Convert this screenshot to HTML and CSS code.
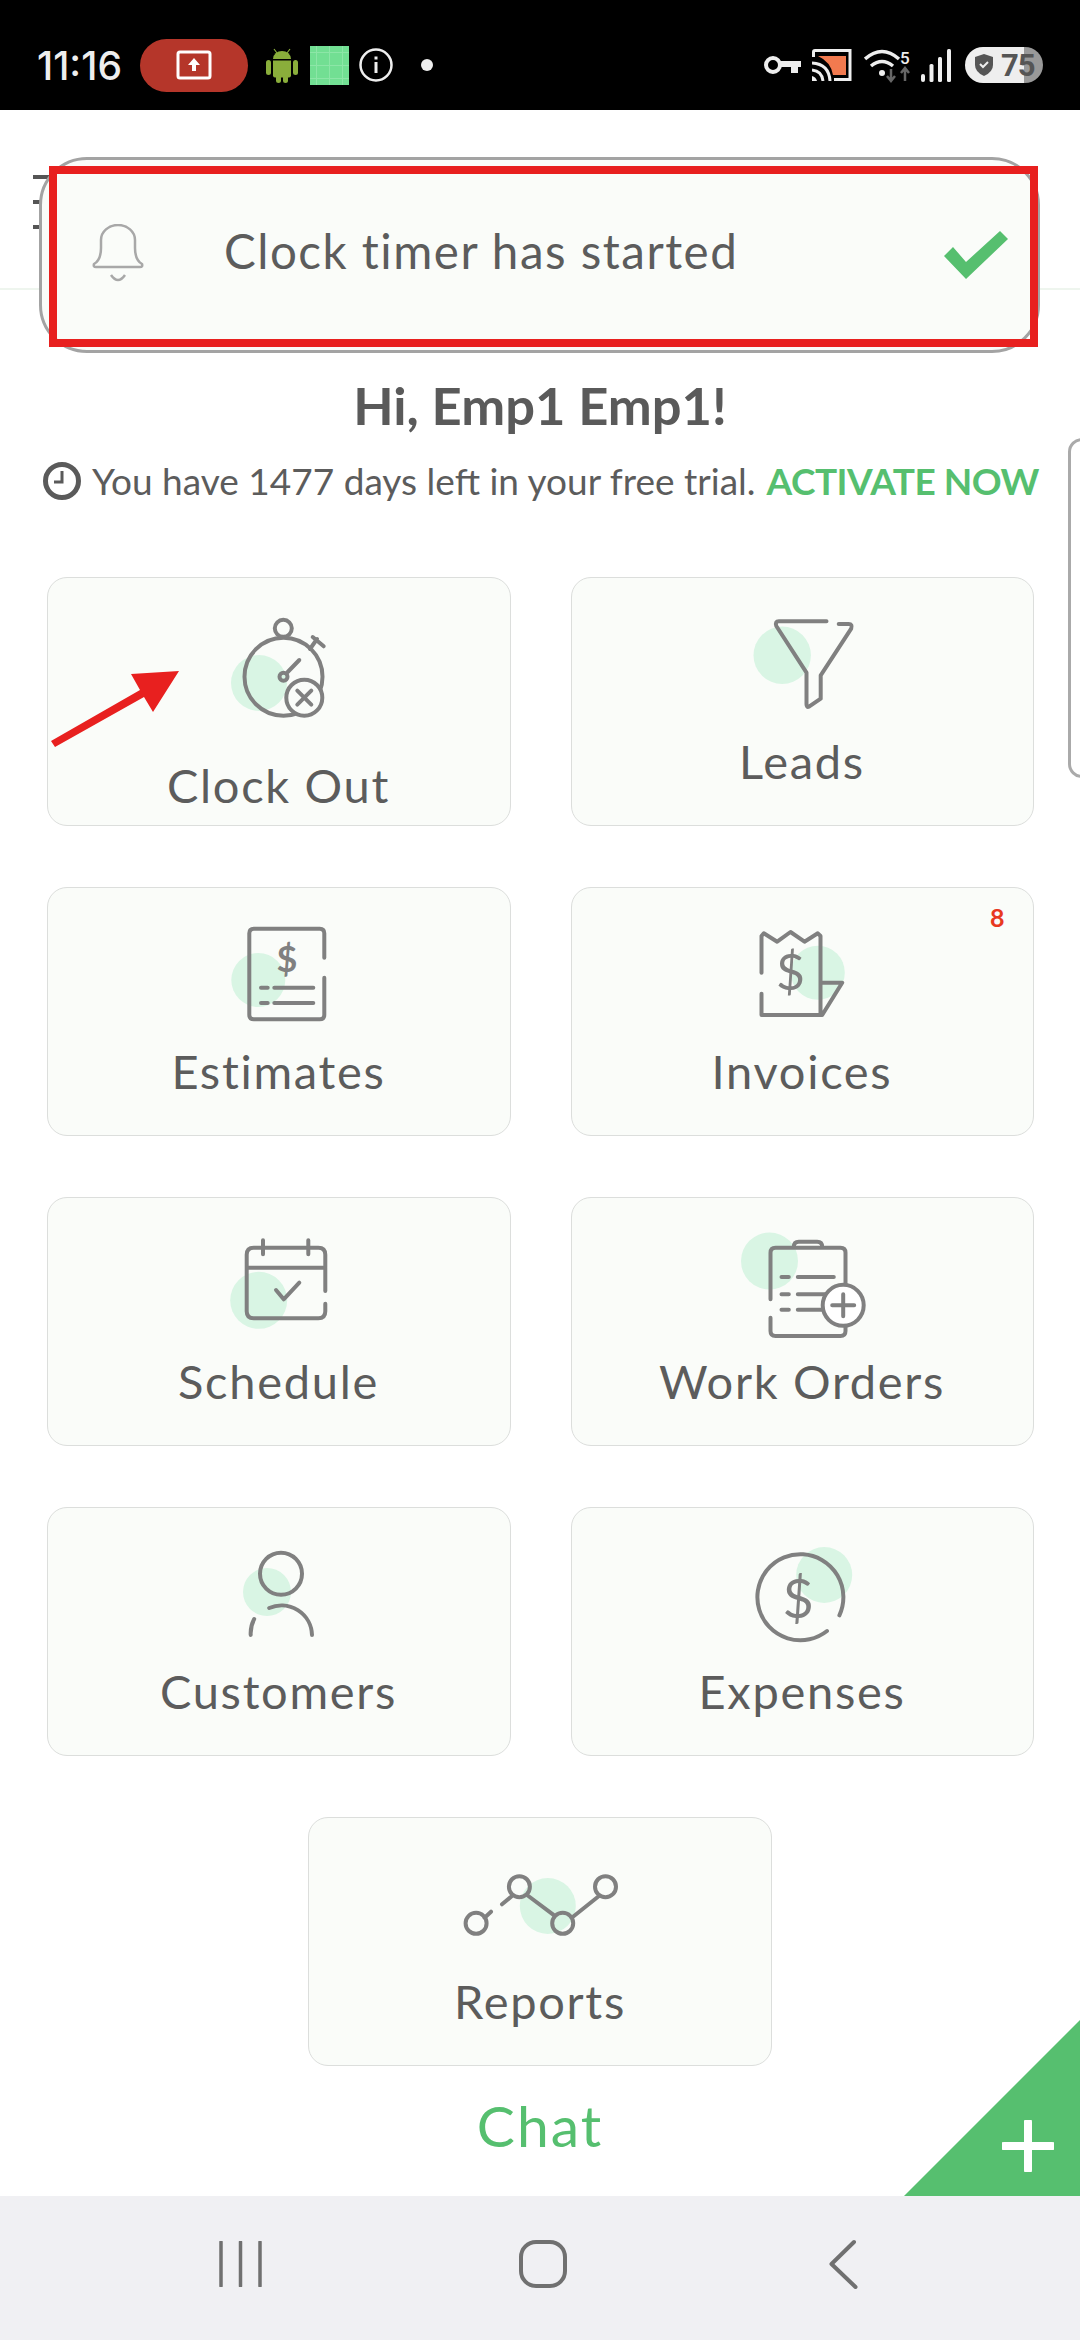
FILE: index.html
```html
<!DOCTYPE html>
<html lang="en">
<head>
    <meta charset="UTF-8">
    <meta name="viewport" content="width=device-width, initial-scale=1.0">
    <title>Home</title>
    <link rel="stylesheet" href="styles.css">
</head>
<body>
<div class="screen">

    <!-- phone status bar -->
    <div class="status">
        <span class="time">11:16</span>
        <span class="rec">
            <svg width="36" height="30" viewBox="0 0 36 30"><rect x="2" y="2" width="32" height="26" rx="2" fill="none" stroke="#fff" stroke-width="3"/><path d="M18 8l6 7h-4v6h-4v-6h-4z" fill="#fff"/></svg>
        </span>
        <svg class="android" width="32" height="35" viewBox="0 0 32 35">
            <path d="M8 1l3 4M24 1l-3 4" stroke="#8aae3b" stroke-width="1.2"/>
            <path d="M7 11a9 8 0 0 1 18 0z" fill="#8aae3b"/>
            <path d="M7 12.500h18v15a2 2 0 0 1-2 2h-14a2 2 0 0 1-2-2z" fill="#8aae3b"/>
            <rect x="0" y="12" width="5" height="15" rx="2.500" fill="#8aae3b"/>
            <rect x="27" y="12" width="5" height="15" rx="2.500" fill="#8aae3b"/>
            <rect x="10" y="27" width="5" height="8" rx="2.500" fill="#8aae3b"/>
            <rect x="17" y="27" width="5" height="8" rx="2.500" fill="#8aae3b"/>
        </svg>
        <span class="qr"></span>
        <svg class="info" width="34" height="34" viewBox="0 0 34 34"><circle cx="17" cy="17" r="15.500" fill="none" stroke="#eee" stroke-width="2.500"/><path d="M15.500 14h3v11h-3zM15.500 8.500h3v3h-3z" fill="#eee"/></svg>
        <span class="dot"></span>

        <div class="status-right">
            <svg class="key" width="37" height="20" viewBox="0 0 37 20"><circle cx="9" cy="10" r="7" fill="none" stroke="#eee" stroke-width="4"/><path d="M16 6h21v6h-3v6h-7v-6h-11z" fill="#eee"/></svg>
            <svg class="cast" width="40" height="32" viewBox="0 0 40 32">
                <path d="M1.500 8v-5q0-1.500 1.500-1.500h35v29h-16" fill="none" stroke="#eee" stroke-width="3"/>
                <path d="M6 7h28v19h-13q-2-13-15-19z" fill="#f27a4f"/>
                <path d="M0 14q17 1 18 18M0 21q10 1 11 11" fill="none" stroke="#eee" stroke-width="3"/>
                <path d="M0 27q4 1 5 5h-5z" fill="#eee"/>
            </svg>
            <svg class="wifi" width="48" height="36" viewBox="0 0 48 36">
                <path d="M1 12q17-15 34 0M7 19q11-9 22 0" fill="none" stroke="#eee" stroke-width="3.500"/>
                <circle cx="18" cy="26" r="3" fill="#eee"/>
                <text class="wifi-num" x="36" y="17">5</text>
                <path d="M27 22v12M23 29l4 5 4-5" fill="none" stroke="#666" stroke-width="2.500"/>
                <path d="M41 34v-13M37 26l4-5 4 5" fill="none" stroke="#666" stroke-width="2.500"/>
            </svg>
            <svg class="signal" width="31" height="33" viewBox="0 0 31 33">
                <rect x="1" y="25" width="4" height="8" rx="2" fill="#eee"/>
                <rect x="9.500" y="15" width="4" height="18" rx="1.500" fill="#eee"/>
                <rect x="18" y="8" width="4" height="25" rx="1.500" fill="#eee"/>
                <rect x="27" y="0" width="4" height="33" rx="1.500" fill="#eee"/>
            </svg>
            <span class="battery">
                <svg width="18" height="22" viewBox="0 0 18 22"><path d="M9 0l9 3v8q0 7-9 11q-9-4-9-11v-8z" fill="#555"/><path d="M5 10l3 3 5-5" fill="none" stroke="#eee" stroke-width="2"/></svg>
                <span>75</span>
            </span>
        </div>
    </div>

    <div class="app">
        <header class="topbar">
            <span class="bar"></span>
            <span class="bar"></span>
            <span class="bar"></span>
        </header>

        <main class="content">
            <h1 class="hello">Hi, Emp1 Emp1!</h1>
            <p class="trial">
                <svg width="38" height="38" viewBox="0 0 38 38"><circle cx="19" cy="19" r="16.500" fill="none" stroke="#5a5a5a" stroke-width="5"/><path d="M19 9v11h-8" fill="none" stroke="#5a5a5a" stroke-width="3"/></svg>
                <span>You have 1477 days left in your free trial.</span>
                <a class="activate">ACTIVATE NOW</a>
            </p>

            <div class="tiles">
                <a class="tile">
                    <svg class="tile-icon tall" viewBox="-100 30 200 134">
                        <circle class="blob" cx="-20" cy="105" r="28"/>
                        <circle class="line" cx="4.500" cy="98.700" r="39"/>
                        <circle class="line" cx="4.300" cy="50.300" r="8.500"/>
                        <path class="line" d="M31 71l7-10M33.700 59l11 9.300M20.300 82l-11.600 12"/>
                        <circle class="line" cx="4.500" cy="98.700" r="4"/>
                        <circle class="line fill-tile" cx="25.300" cy="119.700" r="18"/>
                        <path class="line" d="M18.300 112.700l14 14M32.300 112.700l-14 14"/>
                    </svg>
                    <span class="tile-label">Clock Out</span>
                </a>
                <a class="tile">
                    <svg class="tile-icon" viewBox="-100 30 200 110">
                        <circle class="blob" cx="-19.800" cy="77.300" r="28.700"/>
                        <path class="line" d="M24.500 43.300h-47.700q-4 0-2.500 4.700l30.200 46.700v31.600q0 3.400 2.500 2.400l11.700-8v-23.400l30.500-46.700q1.500-4.700-2.500-4.700h-10"/>
                    </svg>
                    <span class="tile-label">Leads</span>
                </a>
                <a class="tile">
                    <svg class="tile-icon" viewBox="-100 30 200 110">
                        <circle class="blob" cx="-20.700" cy="92" r="27"/>
                        <path class="line" d="M45.300 69.700v-24.500q0-4.500-4.500-4.500h-66q-4.500 0-4.500 4.500v81.600q0 4.500 4.500 4.500h66q4.500 0 4.500-4.500v-37.100"/>
                        <path class="line" d="M-18 99.700h6.700M-4.700 99.700h39M-18 115h6.700M-4.700 115h39"/>
                        <text class="dollar strong" x="8" y="84.300">$</text>
                    </svg>
                    <span class="tile-label">Estimates</span>
                </a>
                <a class="tile">
                    <span class="badge">8</span>
                    <svg class="tile-icon" viewBox="-100 30 200 110">
                        <circle class="blob" cx="15.800" cy="84.700" r="27"/>
                        <path class="line" d="M-40.500 84.700v-36.700l2.300-2.700 13.400 8.400 13.300-9.700 14 9.700 13.300-8.400 2.700 2.700v79M-40.500 105.700v21.300h60.700l20-32.300h-21.700"/>
                        <text class="dollar" x="-11.500" y="101.700">$</text>
                    </svg>
                    <span class="tile-label">Invoices</span>
                </a>
                <a class="tile">
                    <svg class="tile-icon" viewBox="-100 30 200 110">
                        <circle class="blob" cx="-20.300" cy="102.300" r="28.500"/>
                        <path class="line" d="M46.300 93v-36.300q0-7-7-7h-64.600q-7 0-7 7v56.600q0 7 7 7h64.600q7 0 7-7v-7.600M-32.300 69.700h78.600M-16 42.300v14M29.300 42.300v14"/>
                        <path class="line" d="M-3 92l7.700 9.300 15.600-16.600"/>
                    </svg>
                    <span class="tile-label">Schedule</span>
                </a>
                <a class="tile">
                    <svg class="tile-icon" viewBox="-100 30 200 110">
                        <circle class="blob" cx="-32.500" cy="63" r="28.500"/>
                        <path class="line" d="M-31.500 101.300v-46.600q0-5 5-5h65q5 0 5 5v78.300q0 5-5 5h-65q-5 0-5-5v-13.300"/>
                        <path class="line" d="M-8.200 49q0-5.300 5-5.300h18.400q5 0 5 5.300"/>
                        <path class="line" d="M-20.500 79h7.300M-4.200 79h36M-20.500 96.300h7.300M-4.200 96.300h36M-20.500 111.700h7.300M-4.200 111.700h36"/>
                        <circle class="line fill-white" cx="41.200" cy="107.300" r="20.500"/>
                        <path class="line" d="M30.200 107.300h22M41.200 96.300v22"/>
                    </svg>
                    <span class="tile-label">Work Orders</span>
                </a>
                <a class="tile">
                    <svg class="tile-icon" viewBox="-100 30 200 110">
                        <circle class="blob" cx="-12" cy="84" r="24"/>
                        <circle class="line" cx="2" cy="65.700" r="21"/>
                        <path class="line" d="M-9.800 100a30.500 30.500 0 0 1 42.800 27M-28.300 127a30.500 30.500 0 0 1 3.500-16"/>
                    </svg>
                    <span class="tile-label">Customers</span>
                </a>
                <a class="tile">
                    <svg class="tile-icon" viewBox="-100 30 200 110">
                        <circle class="blob" cx="22.200" cy="67" r="28"/>
                        <path class="line" d="M37.400 107.300a43 43 0 1 0-12.400 15.700"/>
                        <text class="dollar big" x="-3.900" y="110">$</text>
                    </svg>
                    <span class="tile-label">Expenses</span>
                </a>
                <a class="tile tile-wide">
                    <svg class="tile-icon" viewBox="-100 30 200 110">
                        <circle class="blob" cx="7.800" cy="88" r="28"/>
                        <circle class="line" cx="-63.900" cy="105.300" r="10.500"/>
                        <circle class="line" cx="-20.600" cy="68.700" r="10.500"/>
                        <circle class="line" cx="22.700" cy="105.300" r="10.500"/>
                        <circle class="line" cx="65.500" cy="68.700" r="10.500"/>
                        <path class="line" d="M-55.400 99.700l6.400-6M-38 86.300l10-8.300M-13 77l27.200 20.300M33 98.700l26-20.700"/>
                    </svg>
                    <span class="tile-label">Reports</span>
                </a>
            </div>

            <a class="chat">Chat</a>
        </main>

        <!-- floating add button in the corner -->
        <a class="corner-add">
            <svg width="52" height="52" viewBox="0 0 52 52"><path d="M26 2v48M2 26h48" stroke="#fff" stroke-width="8" stroke-linecap="round"/></svg>
        </a>

        <!-- side panel handle -->
        <span class="edge-handle"></span>
    </div>

    <nav class="softkeys">
        <svg width="44" height="46" viewBox="0 0 44 46"><path d="M2 1v44M21.500 1v44M41 1v44" stroke="#707070" stroke-width="3.500" stroke-linecap="round"/></svg>
        <svg width="50" height="50" viewBox="0 0 50 50"><rect x="3" y="3" width="44" height="44" rx="15" fill="none" stroke="#707070" stroke-width="4"/></svg>
        <svg width="30" height="50" viewBox="0 0 30 50"><path d="M26 3l-22.500 22 24 23" fill="none" stroke="#707070" stroke-width="4" stroke-linecap="round" stroke-linejoin="round"/></svg>
    </nav>

    <!-- toast on top of the page -->
    <div class="toast">
        <svg width="54" height="62" viewBox="0 0 54 62">
            <path d="M3 40q7-4 7-16v-8a17 15 0 0 1 34 0v8q0 12 7 16q1 3-2 3h-44q-3 0-2-3z" fill="none" stroke="#a8a8a8" stroke-width="2.500"/>
            <path d="M20 51q7 10 14 0" fill="none" stroke="#a8a8a8" stroke-width="2.500"/>
        </svg>
        <span class="toast-text">Clock timer has started</span>
        <svg class="toast-check" width="64" height="48" viewBox="0 0 64 48"><path d="M0 25l9-9 13 15 34-31 8 8-42 40z" fill="#56bf6f"/></svg>
    </div>

    <!-- annotations drawn over the capture -->
    <span class="mark-box"></span>
    <svg class="mark-arrow" width="140" height="90" viewBox="40 660 140 90">
        <path d="M51 741l89-51-9-16 48-3-26 41-9-15-89 50z" fill="#e8201f"/>
    </svg>
</div>
</body>
</html>
```

FILE: styles.css
```css
* {
  box-sizing: border-box;
}

:root {
  --text: #5c5c5c;
  --green: #56bf6f;
  --tile-bg: #fafcf9;
  --tile-border: #dcdedc;
  --icon: #808080;
  --red: #e8201f;
}

body {
  margin: 0;
  font-family: Lato, "Noto Sans", sans-serif;
  color: var(--text);
  background: #fff;
}

.screen {
  position: relative;
  width: 1080px;
  height: 2340px;
  display: flex;
  flex-direction: column;
  overflow: hidden;
}

/* status bar */
.status {
  height: 110px;
  flex: none;
  background: #000;
  display: flex;
  align-items: center;
  padding: 20px 37px 0;
}

.time {
  width: 89px;
  font-family: Inter, sans-serif;
  font-size: 39px;
  font-weight: 500;
  white-space: nowrap;
  color: #eee;
}

.rec {
  width: 108px;
  height: 53px;
  margin-left: 14px;
  border-radius: 27px;
  background: #b5362a;
  display: flex;
  align-items: center;
  justify-content: center;
}

.android {
  margin-left: 18px;
}

.qr {
  width: 39px;
  height: 39px;
  margin-left: 12px;
  background-color: #72df93;
  background-image:
    linear-gradient(90deg, transparent 48%, #8ce6a7 48%, #8ce6a7 52%, transparent 52%),
    linear-gradient(transparent 48%, #8ce6a7 48%, #8ce6a7 52%, transparent 52%);
  background-size: 13px 13px;
}

.info {
  margin-left: 10px;
}

.dot {
  width: 12px;
  height: 12px;
  margin-left: 28px;
  border-radius: 50%;
  background: #eee;
}

.status-right {
  margin-left: auto;
  display: flex;
  align-items: center;
}

.cast {
  margin-left: 11px;
}

.wifi {
  margin-left: 12px;
}

.wifi-num {
  font-family: Roboto, sans-serif;
  font-size: 17px;
  font-weight: 500;
  fill: #eee;
}

.signal {
  margin-left: 8px;
}

.battery {
  width: 78px;
  height: 36px;
  margin-left: 14px;
  padding-left: 10px;
  border-radius: 18px;
  background: linear-gradient(90deg, #eee 76%, #999 76%);
  display: flex;
  align-items: center;
  gap: 8px;
  font-family: Roboto, sans-serif;
  font-size: 31px;
  font-weight: 700;
  letter-spacing: -1px;
  color: #555;
}

/* app */
.app {
  position: relative;
  flex: 1;
}

.topbar {
  height: 180px;
  padding: 65px 0 0 33px;
  border-bottom: 2px solid #eef5ee;
  display: flex;
  flex-direction: column;
  gap: 21px;
}

.bar {
  width: 33px;
  height: 4px;
  background: #555;
}

.content {
  padding-top: 85px;
  display: flex;
  flex-direction: column;
  align-items: center;
}

.hello {
  margin: 0;
  font-size: 52.5px;
  line-height: 60px;
  font-weight: 700;
  color: #5a5a5a;
}

.trial {
  width: 100%;
  margin: 23px 0 0;
  padding-left: 43px;
  display: flex;
  align-items: center;
  gap: 11px;
  font-size: 37px;
  line-height: 46px;
  white-space: nowrap;
}

.activate {
  font-weight: 700;
  letter-spacing: -0.5px;
  color: var(--green);
}

.tiles {
  margin-top: 73px;
  display: grid;
  grid-template-columns: 464px 463px;
  column-gap: 60px;
  row-gap: 61px;
}

.tile {
  position: relative;
  height: 249px;
  padding-top: 30px;
  background: var(--tile-bg);
  border: 1.5px solid var(--tile-border);
  border-radius: 20px;
  display: flex;
  flex-direction: column;
  align-items: center;
}

.tile-wide {
  grid-column: 1 / 3;
  justify-self: center;
  width: 464px;
}

.tile-icon {
  display: block;
  flex: none;
  width: 200px;
  height: 110px;
}

.tile-icon.tall {
  height: 134px;
}

.tile-label {
  margin-top: 15px;
  font-size: 47px;
  line-height: 56px;
  letter-spacing: 1.7px;
  color: var(--text);
}

.blob {
  fill: #d9f5e4;
}

.line {
  fill: none;
  stroke: var(--icon);
  stroke-width: 4;
  stroke-linecap: round;
  stroke-linejoin: round;
}

.fill-tile {
  fill: var(--tile-bg);
}

.fill-white {
  fill: #fff;
}

.dollar {
  font-family: Lato, sans-serif;
  font-size: 50px;
  text-anchor: middle;
  fill: var(--icon);
}

.dollar.big {
  font-size: 54px;
}

.dollar.strong {
  font-size: 36px;
  font-weight: 700;
}

.badge {
  position: absolute;
  top: 14px;
  right: 28px;
  font-size: 25px;
  font-weight: 700;
  color: #e8391f;
}

.chat {
  margin-top: 29px;
  font-size: 57px;
  line-height: 60px;
  letter-spacing: 2px;
  color: var(--green);
}

.corner-add {
  position: absolute;
  right: 0;
  bottom: 0;
  width: 176px;
  height: 176px;
  background: var(--green);
  clip-path: polygon(100% 0, 100% 100%, 0 100%);
}

.corner-add svg {
  position: absolute;
  right: 26px;
  bottom: 24px;
}

.edge-handle {
  position: absolute;
  top: 328px;
  right: -20px;
  width: 32px;
  height: 340px;
  border: 3px solid #aaa;
  border-radius: 14px;
}

/* bottom keys */
.softkeys {
  height: 144px;
  flex: none;
  background: #f0f0f3;
  display: flex;
  align-items: center;
  padding: 0 0 8px 219px;
  gap: 255px;
}

.softkeys svg:last-child {
  margin-left: 5px;
}

/* toast */
.toast {
  position: absolute;
  left: 39px;
  top: 157px;
  width: 1001px;
  height: 196px;
  padding-left: 49px;
  background: var(--tile-bg);
  border: 3px solid #a3a3a3;
  border-radius: 48px;
  display: flex;
  align-items: center;
}

.toast-text {
  margin: 0 0 9px 79px;
  font-size: 47.5px;
  letter-spacing: 1.5px;
  color: var(--text);
}

.toast-check {
  margin-left: auto;
  margin-right: 29px;
}

/* red markup */
.mark-box {
  position: absolute;
  left: 49px;
  top: 166px;
  width: 989px;
  height: 181px;
  border: 8px solid var(--red);
}

.mark-arrow {
  position: absolute;
  left: 40px;
  top: 660px;
}
```
